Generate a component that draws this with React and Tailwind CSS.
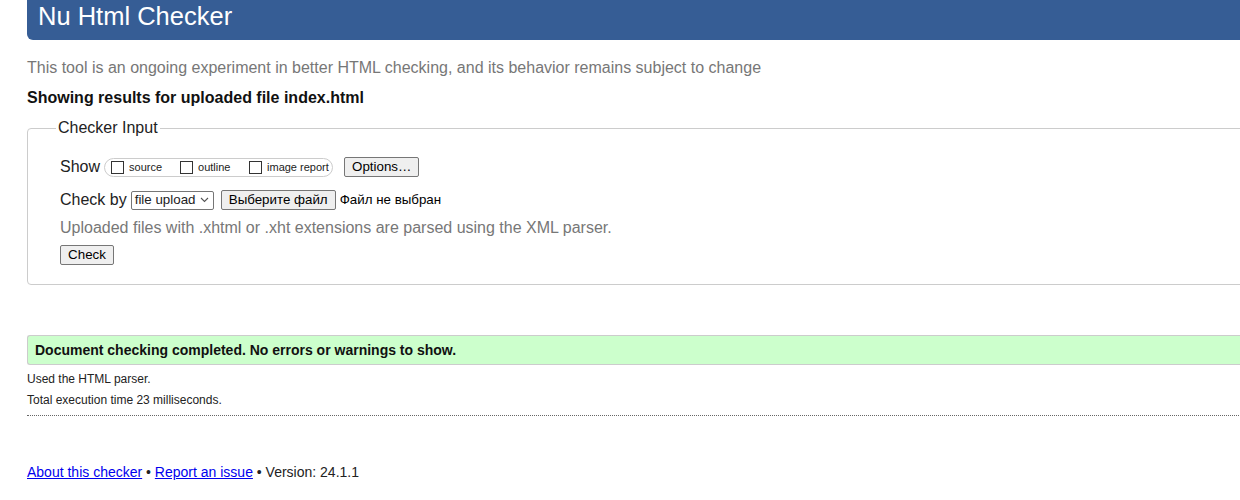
import React from "react";

const font = { fontFamily: '"Liberation Sans", Arial, sans-serif' };

const Box = () => (
  <span className="inline-block w-[13px] h-[13px] border border-[#333] bg-white mr-[5px] align-[-2px]"></span>
);

const Btn = ({ children, className = "" }) => (
  <button className={"h-[20px] px-[7px] border border-[#767676] rounded-[2px] bg-[#efefef] text-[13.333px] leading-none text-black " + className}>
    {children}
  </button>
);

export default function App() {
  return (
    <div className="w-[1240px] h-[500px] overflow-hidden bg-white text-[#222]" style={font}>
      <div className="ml-[27px] w-[1260px]">
        {/* header */}
        <div className="h-[40px] bg-[#365d95] rounded-bl-[6px] pl-[11px] flex items-center">
          <h1 className="text-[25.5px] leading-none text-white mt-[-6px]">Nu Html Checker</h1>
        </div>

        <p className="mt-[19px] text-[16px] leading-[18px] text-[#777]">
          This tool is an ongoing experiment in better HTML checking, and its behavior remains subject to change
        </p>
        <p className="mt-[12px] text-[16px] leading-[18px] font-bold text-[#111]">
          Showing results for uploaded file index.html
        </p>

        {/* checker input */}
        <fieldset className="mt-[12px] border border-[#ccc] rounded-[4px] pl-[32px] pb-[18px] h-[166px]">
          <legend className="ml-[-4px] px-[2px] text-[16px] leading-[18px] text-[#222]">Checker Input</legend>

          <div className="mt-[19px] flex items-center h-[22px]">
            <span className="text-[16px] mr-[4px]">Show</span>
            <div className="h-[19px] w-[229px] border border-[#ccc] rounded-full flex items-center pl-[6px] text-[11px]">
              <label className="flex items-center w-[69px]"><Box />source</label>
              <label className="flex items-center w-[69px]"><Box />outline</label>
              <label className="flex items-center"><Box />image report</label>
            </div>
            <Btn className="ml-[11px] w-[75px]">Options…</Btn>
          </div>

          <div className="mt-[12px] flex items-center h-[20px]">
            <span className="text-[16px] mr-[4px]">Check by</span>
            <div className="h-[19px] w-[83px] border border-[#767676] rounded-[2px] flex items-center justify-between pl-[3px] pr-[4px] text-[13.333px] bg-white">
              <span>file upload</span>
              <svg width="9" height="6" viewBox="0 0 9 6" fill="none" stroke="#555" strokeWidth="1.1">
                <path d="M1 1l3.5 3.5L8 1" />
              </svg>
            </div>
            <Btn className="ml-[7px] w-[115px]">Выберите файл</Btn>
            <span className="ml-[4px] text-[13.333px] text-black">Файл не выбран</span>
          </div>

          <p className="mt-[9px] text-[16px] leading-[18px] text-[#777]">
            Uploaded files with .xhtml or .xht extensions are parsed using the XML parser.
          </p>

          <Btn className="mt-[8px] w-[54px]">Check</Btn>
        </fieldset>

        {/* result */}
        <div className="mt-[50px] h-[30px] bg-[#ccffcc] border border-[#ccc] border-r-0 rounded-l-[3px] pl-[7px] flex items-center">
          <span className="text-[14px] font-bold text-[#111]">Document checking completed. No errors or warnings to show.</span>
        </div>
        <p className="mt-[7px] text-[12px] leading-[14px] text-[#222]">Used the HTML parser.</p>
        <p className="mt-[7px] text-[12px] leading-[14px] text-[#222]">Total execution time 23 milliseconds.</p>
        <div className="mt-[8px] border-t border-dotted border-[#666]"></div>

        <p className="mt-[48px] text-[14px] leading-[16px] text-[#222]">
          <a href="#" className="text-[#0000ee] underline">About this checker</a>
          {" • "}
          <a href="#" className="text-[#0000ee] underline">Report an issue</a>
          {" • Version: 24.1.1"}
        </p>
      </div>
    </div>
  );
}
